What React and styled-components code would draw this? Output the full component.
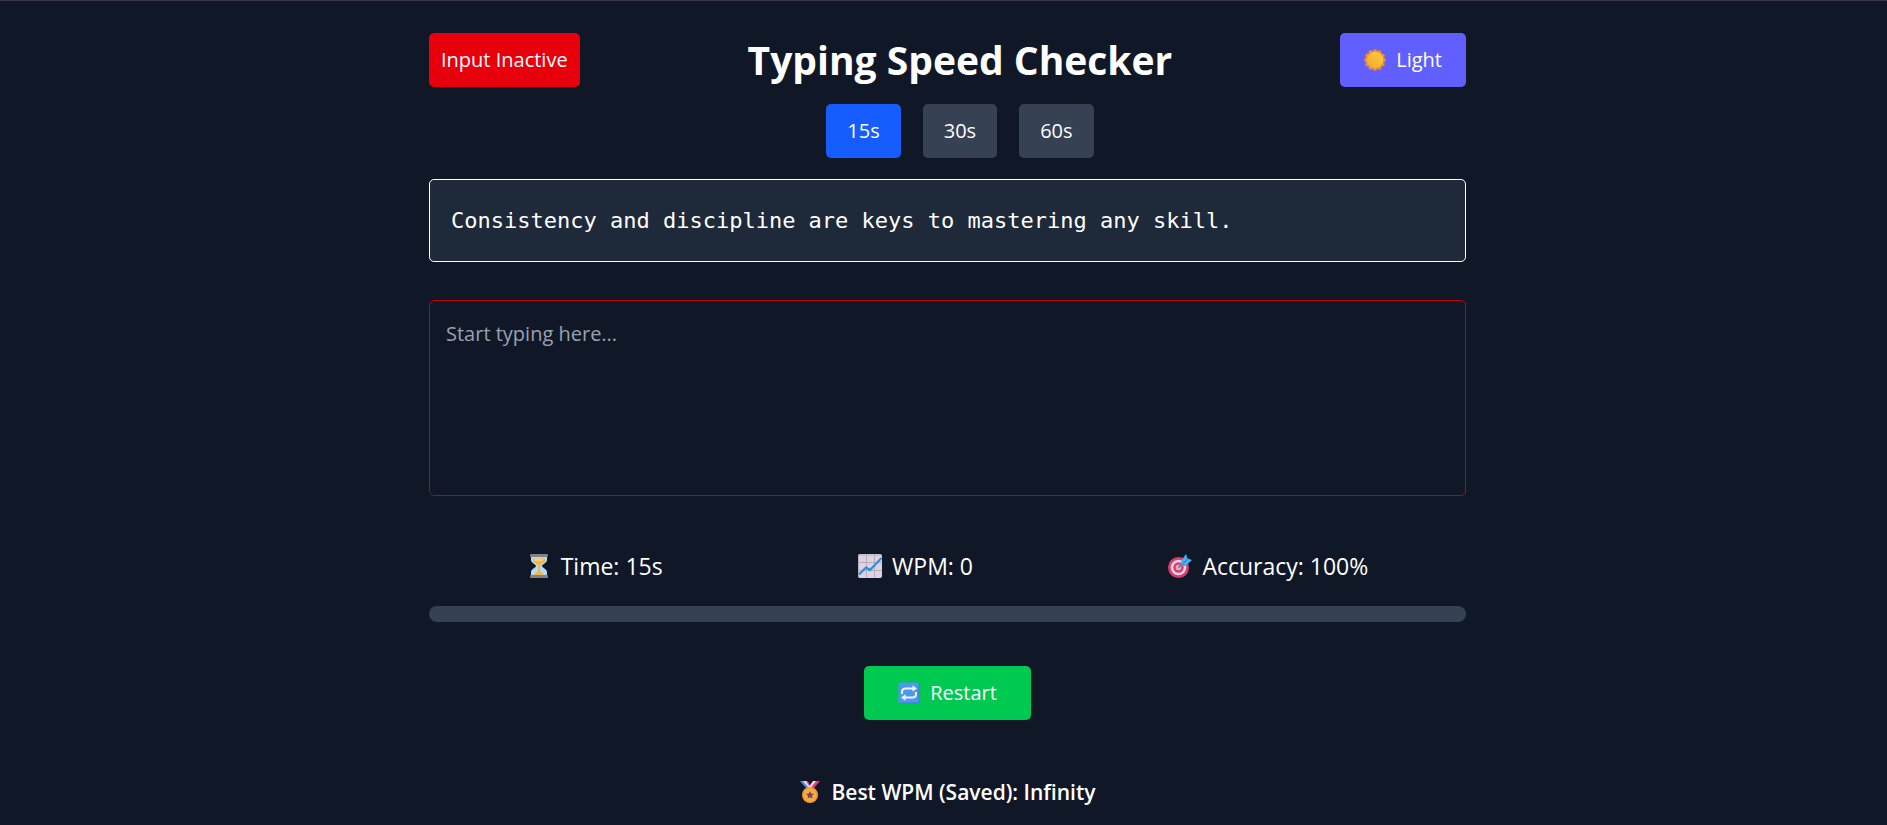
import React, { useState } from "react";
import styled, { createGlobalStyle } from "styled-components";

const GlobalStyle = createGlobalStyle`
  *, *::before, *::after { box-sizing: border-box; }
  body {
    margin: 0;
    background: #101828;
    color: #fff;
    font-family: "Segoe UI", "Open Sans", "Noto Sans", sans-serif;
    font-size: 20px;
    line-height: 32px;
  }
  button, textarea { font: inherit; color: inherit; }
`;

const Page = styled.div`
  min-height: 100vh;
  border-top: 1px solid #3a3446;
  padding: 32px 16px 16px 24px;
`;

const Container = styled.main`
  display: flex;
  flex-direction: column;
  max-width: 1037px;
  margin: 0 auto;
`;

const Header = styled.header`
  display: flex;
  justify-content: space-between;
  align-items: flex-start;
`;

const HeaderCenter = styled.div`
  display: flex;
  flex-direction: column;
  align-items: center;
  gap: 17px;
`;

const Title = styled.h1`
  margin: 0;
  font-size: 39px;
  font-weight: 700;
  line-height: 54px;
`;

const Status = styled.div`
  padding: 11px 12px;
  border-radius: 5px;
  background: #e7000b;
`;

const Button = styled.button`
  display: inline-flex;
  align-items: center;
  gap: 10px;
  padding: 11px ${(p) => p.$padX}px;
  border: 0;
  border-radius: 5px;
  background: ${(p) => p.$bg};
  cursor: pointer;
`;

const Durations = styled.div`
  display: flex;
  gap: 22px;
`;

const Quote = styled.p`
  margin: 21px 0 0;
  padding: 24px 21px;
  border: 1px solid #fff;
  border-radius: 5px;
  background: #1e2939;
  font-family: Consolas, "DejaVu Sans Mono", monospace;
  font-size: 22px;
  line-height: 33px;
`;

const TypingArea = styled.textarea`
  display: block;
  width: 100%;
  height: 196px;
  margin-top: 38px;
  padding: 17px 16px;
  border: 1px solid #c10007;
  border-radius: 5px;
  background: transparent;
  outline: none;
  resize: none;
  &::placeholder { color: #99a1af; opacity: 1; }
`;

const Stats = styled.div`
  display: flex;
  justify-content: space-around;
  margin-top: 54px;
  font-size: 23px;
`;

const Stat = styled.div`
  display: flex;
  align-items: center;
  gap: 10px;
`;

const Track = styled.div`
  height: 16px;
  margin-top: 24px;
  border-radius: 8px;
  background: #364153;
  overflow: hidden;
`;

const Fill = styled.div`
  height: 100%;
  background: #00c951;
`;

const Actions = styled.div`
  display: flex;
  justify-content: center;
  margin-top: 44px;
`;

const Best = styled.p`
  display: flex;
  align-items: center;
  justify-content: center;
  gap: 10px;
  margin: 56px 0 0;
  font-size: 21px;
  font-weight: 600;
`;

const Icon = styled.svg`
  flex: none;
  width: ${(p) => p.$size}px;
  height: ${(p) => p.$size}px;
`;

function SunIcon() {
  const points = Array.from({ length: 12 }, (_, i) => {
    const a = (i * Math.PI) / 6;
    return <circle key={i} cx={11 + 8.6 * Math.cos(a)} cy={11 + 8.6 * Math.sin(a)} r="2.2" fill="#f58a2e" />;
  });
  return (
    <Icon $size={22} viewBox="0 0 22 22" aria-hidden="true">
      <defs>
        <linearGradient id="sun" x1="1" y1="0" x2="0" y2="1">
          <stop offset="0" stopColor="#ffd43a" />
          <stop offset="1" stopColor="#efa331" />
        </linearGradient>
      </defs>
      {points}
      <circle cx="11" cy="11" r="8.3" fill="url(#sun)" />
    </Icon>
  );
}

function HourglassIcon() {
  return (
    <Icon $size={24} viewBox="0 0 24 24" aria-hidden="true">
      <path d="M4 2H20V6C20 9 15 10.500 15 12S20 15 20 18V22H4V18C4 15 9 13.500 9 12S4 9 4 6Z" fill="#b5dcf5" />
      <path d="M6 4.500H18V6.500C18 9 13 10 13 12V17L18 21.500H6L11 17V12C11 10 6 9 6 6.500Z" fill="#f3b545" />
      <path d="M7 5H17L15 7H8Z" fill="#ffd071" />
      <rect x="3" y="0" width="18" height="3" rx="1" fill="#858087" />
      <rect x="3" y="21" width="18" height="3" rx="1" fill="#858087" />
    </Icon>
  );
}

function ChartIcon() {
  return (
    <Icon $size={24} viewBox="0 0 24 24" aria-hidden="true">
      <rect width="24" height="24" rx="2" fill="#dcd2e2" />
      <path d="M.5 23V1H23M.5 8.500H24M.5 16.500H24M8.500 0V24M16.500 0V24" stroke="#b8acbf" strokeWidth="1" fill="none" />
      <path d="M1 20.500L8 13.500L12 16L23.500 4" stroke="#2c8fdb" strokeWidth="2.200" fill="none" strokeLinejoin="round" />
    </Icon>
  );
}

function TargetIcon() {
  return (
    <Icon $size={24} viewBox="0 0 24 24" aria-hidden="true">
      <circle cx="10.500" cy="13.500" r="10.500" fill="#dd3d6c" />
      <circle cx="10.500" cy="13.500" r="7.800" fill="#e3d4e7" />
      <circle cx="10.500" cy="13.500" r="5.200" fill="#dd3d6c" />
      <circle cx="10.500" cy="13.500" r="2.700" fill="#d9b7cf" />
      <path d="M10.500 13.500L14 10" stroke="#7c5b8b" strokeWidth="1.400" />
      <path d="M13 7L18 0L19.500 4.500L24 6L17.500 12L12.500 12Z" fill="#49adf0" />
      <path d="M13 12L20 4.500" stroke="#2679bd" strokeWidth="1" />
    </Icon>
  );
}

function RepeatIcon() {
  return (
    <Icon $size={22} viewBox="0 0 22 22" aria-hidden="true">
      <rect x=".5" y=".5" width="21" height="21" rx="2" fill="#4b98f0" />
      <path d="M1 21L21 21V1" stroke="#4276d2" fill="none" />
      <path d="M4 12V10Q4 6.500 7.500 6.500H15M18 10V12Q18 15.500 14.500 15.500H7" stroke="#f5f0fb" strokeWidth="2" fill="none" />
      <path d="M14.500 3.300L19 6.500L14.500 9.700ZM7.500 12.300L3 15.500L7.500 18.700Z" fill="#f5f0fb" />
    </Icon>
  );
}

function MedalIcon() {
  return (
    <Icon $size={22} viewBox="0 0 22 22" aria-hidden="true">
      <path d="M1 0H5.500L12.500 8H8Z" fill="#3f9bea" />
      <path d="M4 0H8L13 7L11 8Z" fill="#f0ddeb" />
      <path d="M7 0H9L12 4L10.500 5.500Z" fill="#e33c6d" />
      <path d="M21 0H16L9 8H14Z" fill="#e33c6d" />
      <path d="M17 0H14L9 7L11 8Z" fill="#f0ddeb" />
      <path d="M9 0H13L11 4Z" fill="#101828" />
      <circle cx="11" cy="14" r="8" fill="#f39a34" />
      <circle cx="11" cy="14" r="6.200" fill="#f8ac43" />
      <path d="M11 10L12.200 12.500L15 12.900L13 14.800L13.500 17.600L11 16.300L8.500 17.600L9 14.800L7 12.900L9.800 12.500Z" fill="#7d4455" />
    </Icon>
  );
}

const DURATIONS = [15, 30, 60];

export default function App() {
  const [duration, setDuration] = useState(15);
  const [text, setText] = useState("");

  return (
    <>
      <GlobalStyle />
      <Page>
        <Container>
          <Header>
            <Status>Input Inactive</Status>
            <HeaderCenter>
              <Title>Typing Speed Checker</Title>
              <Durations>
                {DURATIONS.map((d) => (
                  <Button
                    key={d}
                    type="button"
                    $padX={21}
                    $bg={d === duration ? "#155dfc" : "#364153"}
                    onClick={() => setDuration(d)}
                  >
                    {d}s
                  </Button>
                ))}
              </Durations>
            </HeaderCenter>
            <Button type="button" $padX={24} $bg="#615fff">
              <SunIcon />
              Light
            </Button>
          </Header>
          <Quote>Consistency and discipline are keys to mastering any skill.</Quote>
          <TypingArea
            aria-label="Typing input"
            placeholder="Start typing here..."
            value={text}
            onChange={(e) => setText(e.target.value)}
          />
          <Stats>
            <Stat><HourglassIcon />Time: {duration}s</Stat>
            <Stat><ChartIcon />WPM: 0</Stat>
            <Stat><TargetIcon />Accuracy: 100%</Stat>
          </Stats>
          <Track>
            <Fill style={{ width: `${text.length}%` }} />
          </Track>
          <Actions>
            <Button type="button" $padX={34} $bg="#00c951" onClick={() => setText("")}>
              <RepeatIcon />
              Restart
            </Button>
          </Actions>
          <Best><MedalIcon />Best WPM (Saved): Infinity</Best>
        </Container>
      </Page>
    </>
  );
}
